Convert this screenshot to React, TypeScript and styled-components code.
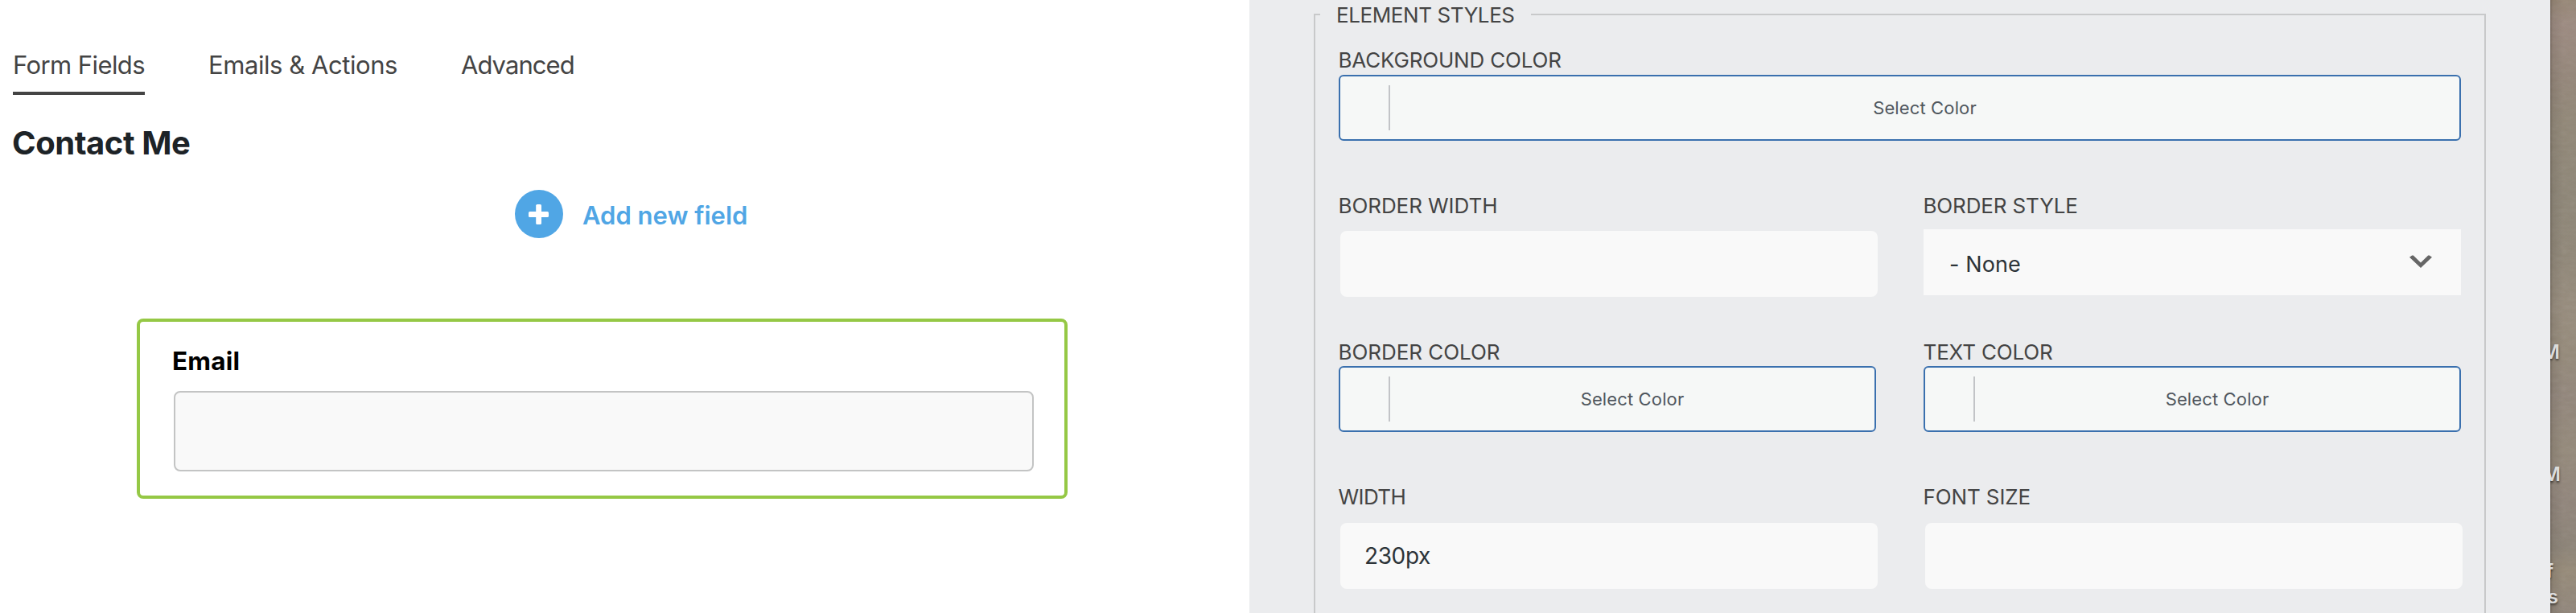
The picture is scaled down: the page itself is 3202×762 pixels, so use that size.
import React from "react";
import styled, { createGlobalStyle } from "styled-components";

const GlobalStyle = createGlobalStyle`
  *, *::before, *::after { box-sizing: border-box; }
  body {
    margin: 0;
    background: #fff;
    font-family: Inter, "Liberation Sans", sans-serif;
    overflow: hidden;
  }
`;

const Page = styled.div`
  display: flex;
  width: 3202px;
  height: 762px;
  overflow: hidden;
`;

const FormPane = styled.main`
  width: 1553px;
  padding: 61px 0 0 16px;
  background: #fff;
`;

const Tabs = styled.nav`
  display: flex;
  gap: 79px;
`;

const Tab = styled.a<{ $active?: boolean; $tracking: number }>`
  min-width: 139px;
  padding-bottom: 13px;
  border-bottom: 4px solid ${(p) => (p.$active ? "#444" : "transparent")};
  color: #444;
  font-size: 31px;
  line-height: 40px;
  letter-spacing: ${(p) => p.$tracking}px;
  white-space: nowrap;
`;

const Title = styled.h1`
  margin: 36px 0 0 -1px;
  color: #1d2327;
  font-size: 40px;
  font-weight: 650;
  line-height: 47px;
  letter-spacing: -0.45px;
`;

const AddField = styled.button`
  display: flex;
  align-items: center;
  gap: 24px;
  margin: 35px 0 0 624px;
  padding: 0;
  border: 0;
  background: none;
  color: #50a6e5;
  font: 600 31px/40px Inter, "Liberation Sans", sans-serif;
`;

const AddLabel = styled.span`
  padding-top: 3px;
`;

const FieldCard = styled.section`
  width: 1157px;
  margin: 100px 0 0 154px;
  padding: 30px 38px 30px 42px;
  border: 4px solid #95c845;
  border-radius: 8px;
`;

const FieldTitle = styled.div`
  margin: 0 0 18px -2px;
  color: #000;
  font-size: 31.5px;
  font-weight: 700;
  line-height: 38px;
  letter-spacing: 0.2px;
`;

const FieldInput = styled.div`
  height: 100px;
  border: 2px solid #c3c4c4;
  border-radius: 8px;
  background: #f9f9f9;
`;

const StylePane = styled.aside`
  width: 1617px;
  padding: 0 80px;
  background: #ebecee;
`;

const StyleGroup = styled.fieldset`
  min-width: 0;
  height: 800px;
  margin: 0;
  padding: 22px 29px 0;
  border: 2px solid #c8c9ca;
`;

const GroupTitle = styled.legend`
  width: 262px;
  margin-left: -23px;
  padding: 1px 0 0 20px;
  color: #444;
  font-size: 26px;
  line-height: 35px;
  letter-spacing: -0.41px;
  white-space: nowrap;
`;

const Settings = styled.div`
  display: grid;
  grid-template-columns: 668px 668px;
  grid-template-rows: 181px 182px 180px 131px;
  column-gap: 59px;
`;

const Setting = styled.div<{ $wide?: boolean }>`
  grid-column: ${(p) => (p.$wide ? "1 / -1" : "auto")};
`;

const SettingLabel = styled.div<{ $gap: number; $tracking: number }>`
  margin: 0 0 ${(p) => p.$gap}px -0.5px;
  color: #444;
  font-size: 26px;
  line-height: 33px;
  letter-spacing: ${(p) => p.$tracking}px;
`;

const ColorButton = styled.div`
  display: flex;
  align-items: center;
  height: 82px;
  padding-left: 60px;
  border: 2px solid #3a70ae;
  border-radius: 6px;
  background: #f6f8f7;
`;

const Divider = styled.span`
  width: 2px;
  height: 56px;
  background: #c2c4c7;
`;

const ColorText = styled.span`
  flex: 1;
  color: #50575e;
  font-size: 22px;
  line-height: 28px;
  letter-spacing: 0.13px;
  text-align: center;
`;

const TextInput = styled.div`
  display: flex;
  align-items: center;
  height: 82px;
  margin: 0 -2px 0 2px;
  padding-left: 30px;
  border-radius: 8px;
  background: #f9f9f9;
  color: #2c3338;
  font-size: 28px;
  letter-spacing: -0.38px;
`;

const Select = styled.div`
  display: flex;
  align-items: center;
  justify-content: space-between;
  height: 82px;
  padding: 0 36px 0 32px;
  background: #f9f9f9;
  color: #2c3338;
  font-size: 27px;
  letter-spacing: 0.1px;
`;

const SelectValue = styled.span`
  padding-top: 4px;
`;

const Chevron = styled.svg`
  margin-bottom: 3px;
`;

const Desktop = styled.div`
  position: relative;
  width: 32px;
  overflow: hidden;
  background:
    linear-gradient(90deg, rgba(40, 32, 26, 0.35), rgba(40, 32, 26, 0.1) 3px, transparent 16px),
    linear-gradient(180deg, #978776 0, #9c8a80 30px, #948679 100px, #918777 150px, #8e8677 250px,
      #908778 320px, #978c7d 380px, #958a7a 440px, #92867b 490px, #94897a 560px, #91857b 620px,
      #8c8377 680px, #968a78 710px, #90857a 762px);
`;

const Grain = styled.svg`
  display: block;
  opacity: 0.1;
`;

const IconCaption = styled.span<{ $baseline: number; $right: number }>`
  position: absolute;
  top: ${(p) => p.$baseline - 23}px;
  right: ${(p) => 32 - p.$right}px;
  color: #dcdcdc;
  font-size: 24px;
  font-weight: 600;
  line-height: 30px;
  text-shadow: 0 2px 3px rgba(0, 0, 0, 0.6);
`;

function ColorPicker() {
  return (
    <ColorButton>
      <Divider />
      <ColorText>Select Color</ColorText>
    </ColorButton>
  );
}

export default function App() {
  return (
    <>
      <GlobalStyle />
      <Page>
        <FormPane>
          <Tabs>
            <Tab $active $tracking={-0.58}>Form Fields</Tab>
            <Tab $tracking={-0.44}>Emails &amp; Actions</Tab>
            <Tab $tracking={-0.95}>Advanced</Tab>
          </Tabs>
          <Title>Contact Me</Title>
          <AddField>
            <svg width="60" height="60" viewBox="0 0 60 60">
              <circle cx="30" cy="30" r="30" fill="#50a6e5" />
              <rect x="26.2" y="18" width="6.8" height="25" rx="1.6" fill="#fff" />
              <rect x="17" y="27" width="25" height="7" rx="1.6" fill="#fff" />
            </svg>
            <AddLabel>Add new field</AddLabel>
          </AddField>
          <FieldCard>
            <FieldTitle>Email</FieldTitle>
            <FieldInput />
          </FieldCard>
        </FormPane>

        <StylePane>
          <StyleGroup>
            <GroupTitle>ELEMENT STYLES</GroupTitle>
            <Settings>
              <Setting $wide>
                <SettingLabel $gap={2} $tracking={-0.18}>BACKGROUND COLOR</SettingLabel>
                <ColorPicker />
              </Setting>
              <Setting>
                <SettingLabel $gap={15} $tracking={-0.07}>BORDER WIDTH</SettingLabel>
                <TextInput />
              </Setting>
              <Setting>
                <SettingLabel $gap={13} $tracking={-0.15}>BORDER STYLE</SettingLabel>
                <Select>
                  <SelectValue>- None</SelectValue>
                  <Chevron width="28" height="16" viewBox="0 0 28 16">
                    <path d="M0 2.8 L3.2 0.4 L4.8 0.6 L14 9.5 L23.2 0.6 L24.8 0.4 L28 2.8 L14 16 Z" fill="#666" />
                  </Chevron>
                </Select>
              </Setting>
              <Setting>
                <SettingLabel $gap={1} $tracking={-0.05}>BORDER COLOR</SettingLabel>
                <ColorPicker />
              </Setting>
              <Setting>
                <SettingLabel $gap={1} $tracking={-0.15}>TEXT COLOR</SettingLabel>
                <ColorPicker />
              </Setting>
              <Setting>
                <SettingLabel $gap={16} $tracking={-0.6}>WIDTH</SettingLabel>
                <TextInput>230px</TextInput>
              </Setting>
              <Setting>
                <SettingLabel $gap={16} $tracking={-0.12}>FONT SIZE</SettingLabel>
                <TextInput />
              </Setting>
            </Settings>
          </StyleGroup>
        </StylePane>

        <Desktop>
          <Grain width="32" height="762">
            <filter id="grain">
              <feTurbulence type="fractalNoise" baseFrequency="0.09 0.2" numOctaves="3" seed="4" />
              <feColorMatrix type="saturate" values="0" />
            </filter>
            <rect width="32" height="762" filter="url(#grain)" />
          </Grain>
          <IconCaption $baseline={446} $right={12}>M</IconCaption>
          <IconCaption $baseline={598} $right={13}>M</IconCaption>
          <IconCaption $baseline={718} $right={4}>f</IconCaption>
          <IconCaption $baseline={750} $right={10}>s</IconCaption>
        </Desktop>
      </Page>
    </>
  );
}
